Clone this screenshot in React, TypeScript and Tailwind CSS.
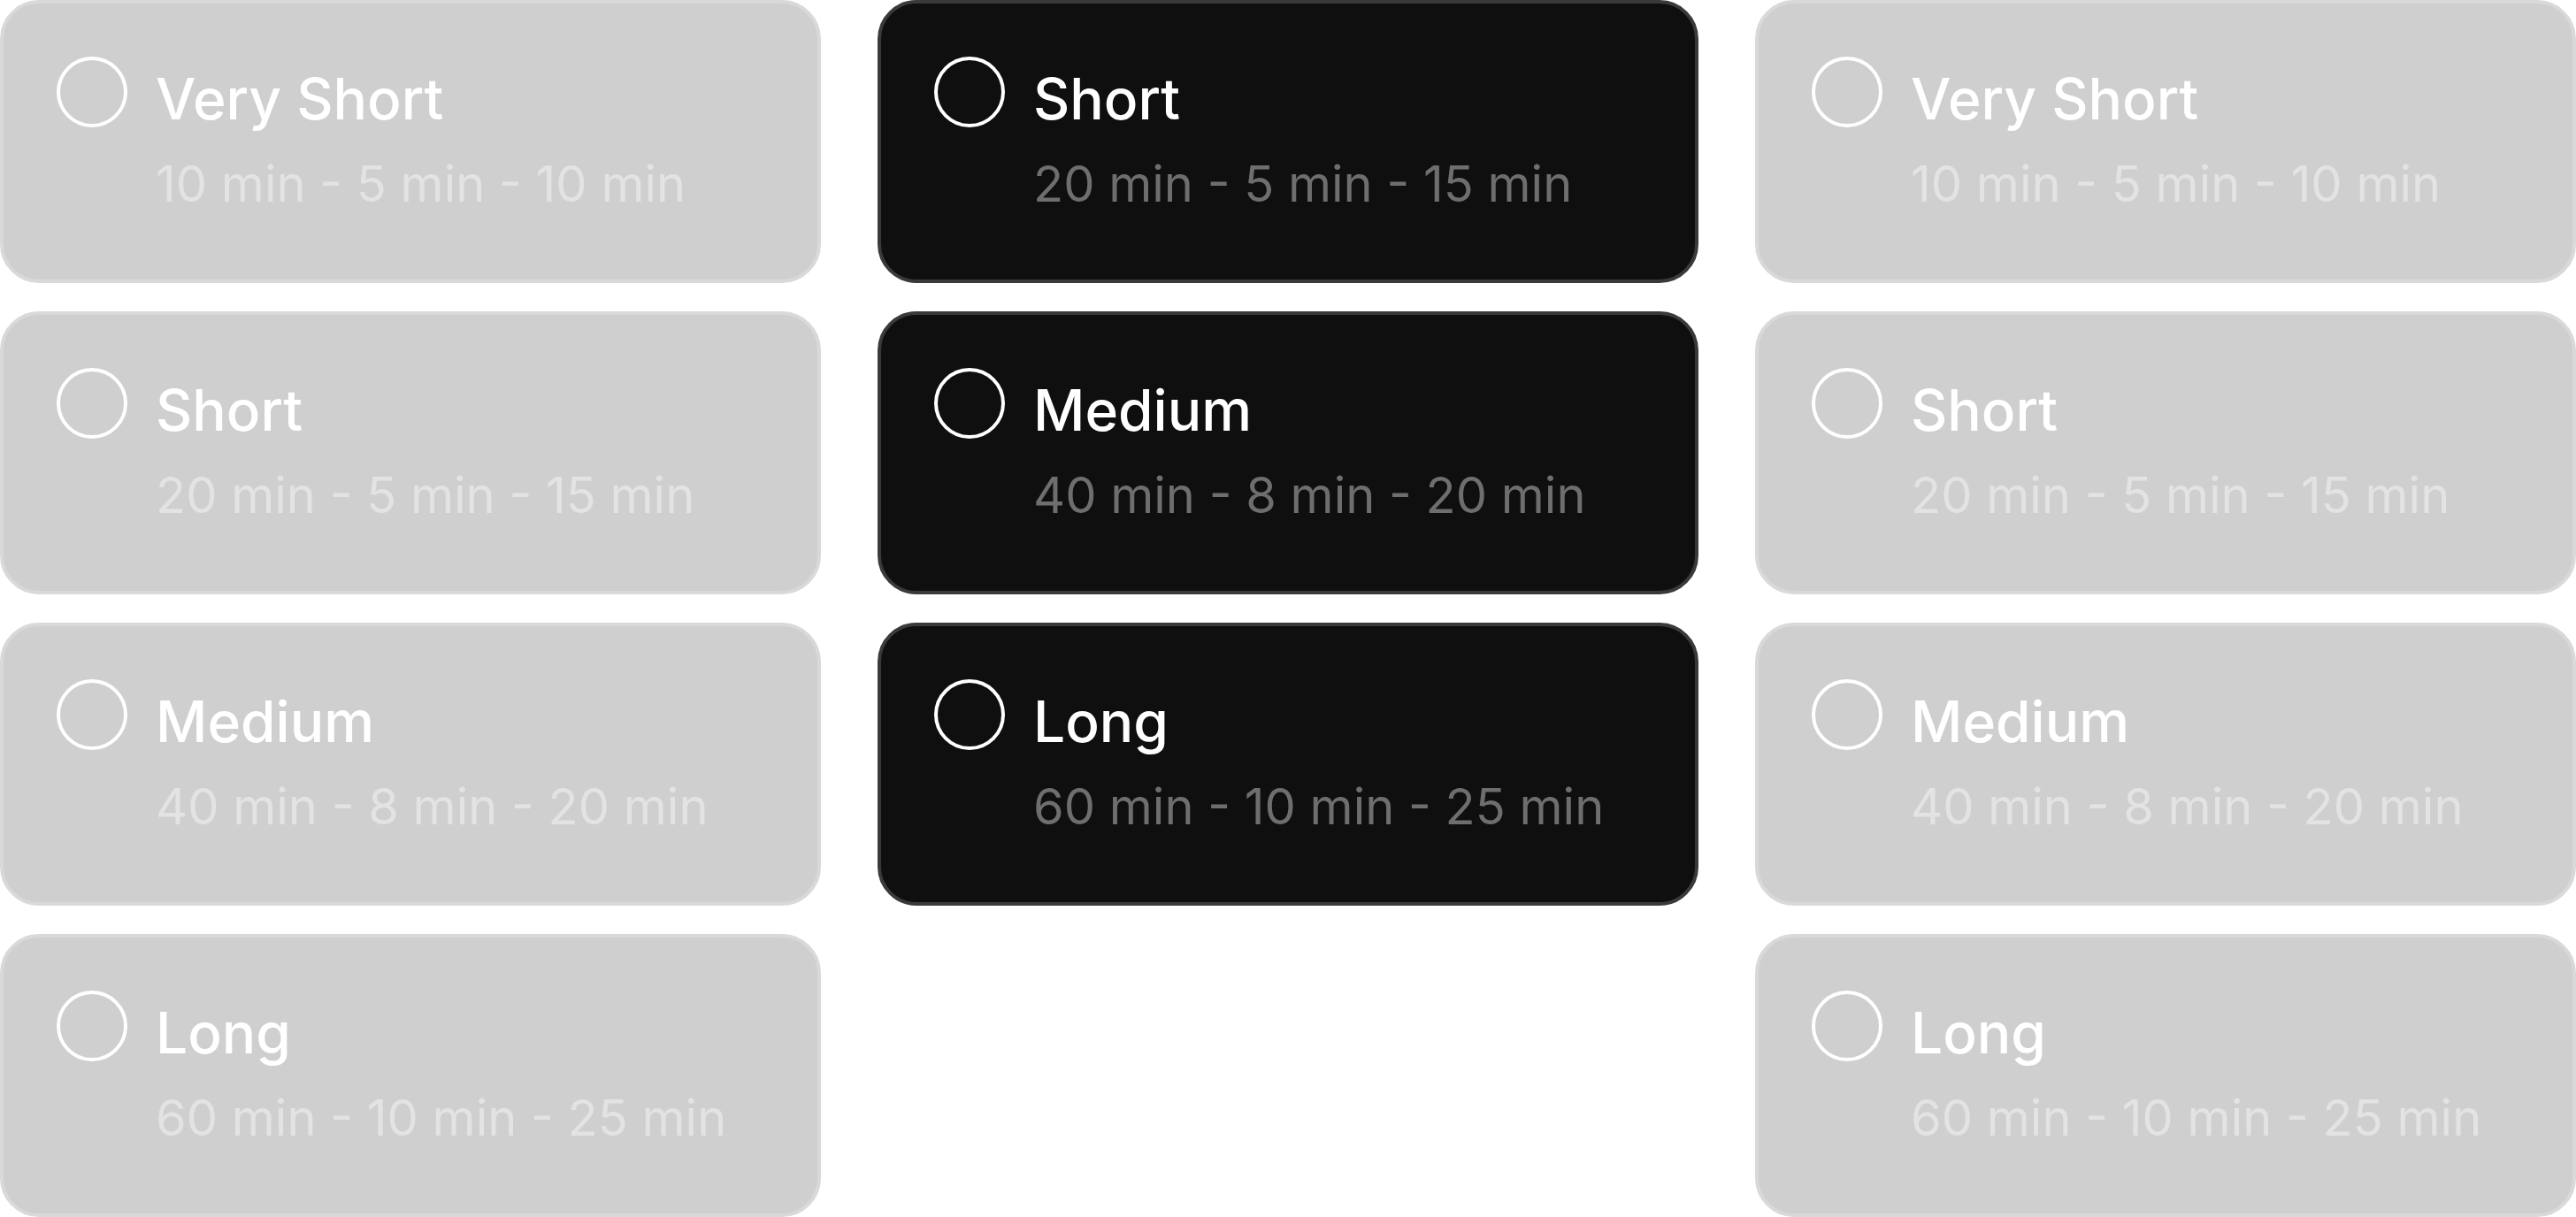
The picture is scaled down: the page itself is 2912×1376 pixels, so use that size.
import React from 'react';

type Preset = {
  name: string;
  times: string;
};

const allPresets: Preset[] = [
  { name: 'Very Short', times: '10 min - 5 min - 10 min' },
  { name: 'Short', times: '20 min - 5 min - 15 min' },
  { name: 'Medium', times: '40 min - 8 min - 20 min' },
  { name: 'Long', times: '60 min - 10 min - 25 min' },
];

const darkPresets = allPresets.slice(1);

function PresetCard({ preset, dark }: { preset: Preset; dark?: boolean }) {
  return (
    <div
      className={
        dark
          ? 'flex h-[320px] gap-8 rounded-[44px] border-4 border-[#3a3a3a] bg-[#0f0f0f] p-[60px]'
          : 'flex h-[320px] gap-8 rounded-[44px] border-4 border-[#d9d9d9] bg-[#cfcfcf] p-[60px]'
      }
    >
      <span className="h-20 w-20 shrink-0 rounded-full border-4 border-white" />
      <div className="flex flex-col">
        <p className="text-[64px] font-medium leading-[96px] text-white">{preset.name}</p>
        <p
          className={
            dark
              ? 'text-[56px] leading-[96px] text-[#6e6e6e]'
              : 'text-[56px] leading-[96px] text-[#e3e3e3]'
          }
        >
          {preset.times}
        </p>
      </div>
    </div>
  );
}

export default function App() {
  return (
    <div
      className="grid h-[1376px] w-[2912px] grid-cols-3 items-start gap-x-16 bg-white"
      style={{ fontFamily: 'Inter, "Noto Sans", sans-serif' }}
    >
      <div className="flex flex-col gap-8">
        {allPresets.map((p) => (
          <PresetCard key={p.name} preset={p} />
        ))}
      </div>
      <div className="flex flex-col gap-8">
        {darkPresets.map((p) => (
          <PresetCard key={p.name} preset={p} dark />
        ))}
      </div>
      <div className="flex flex-col gap-8">
        {allPresets.map((p) => (
          <PresetCard key={p.name} preset={p} />
        ))}
      </div>
    </div>
  );
}
